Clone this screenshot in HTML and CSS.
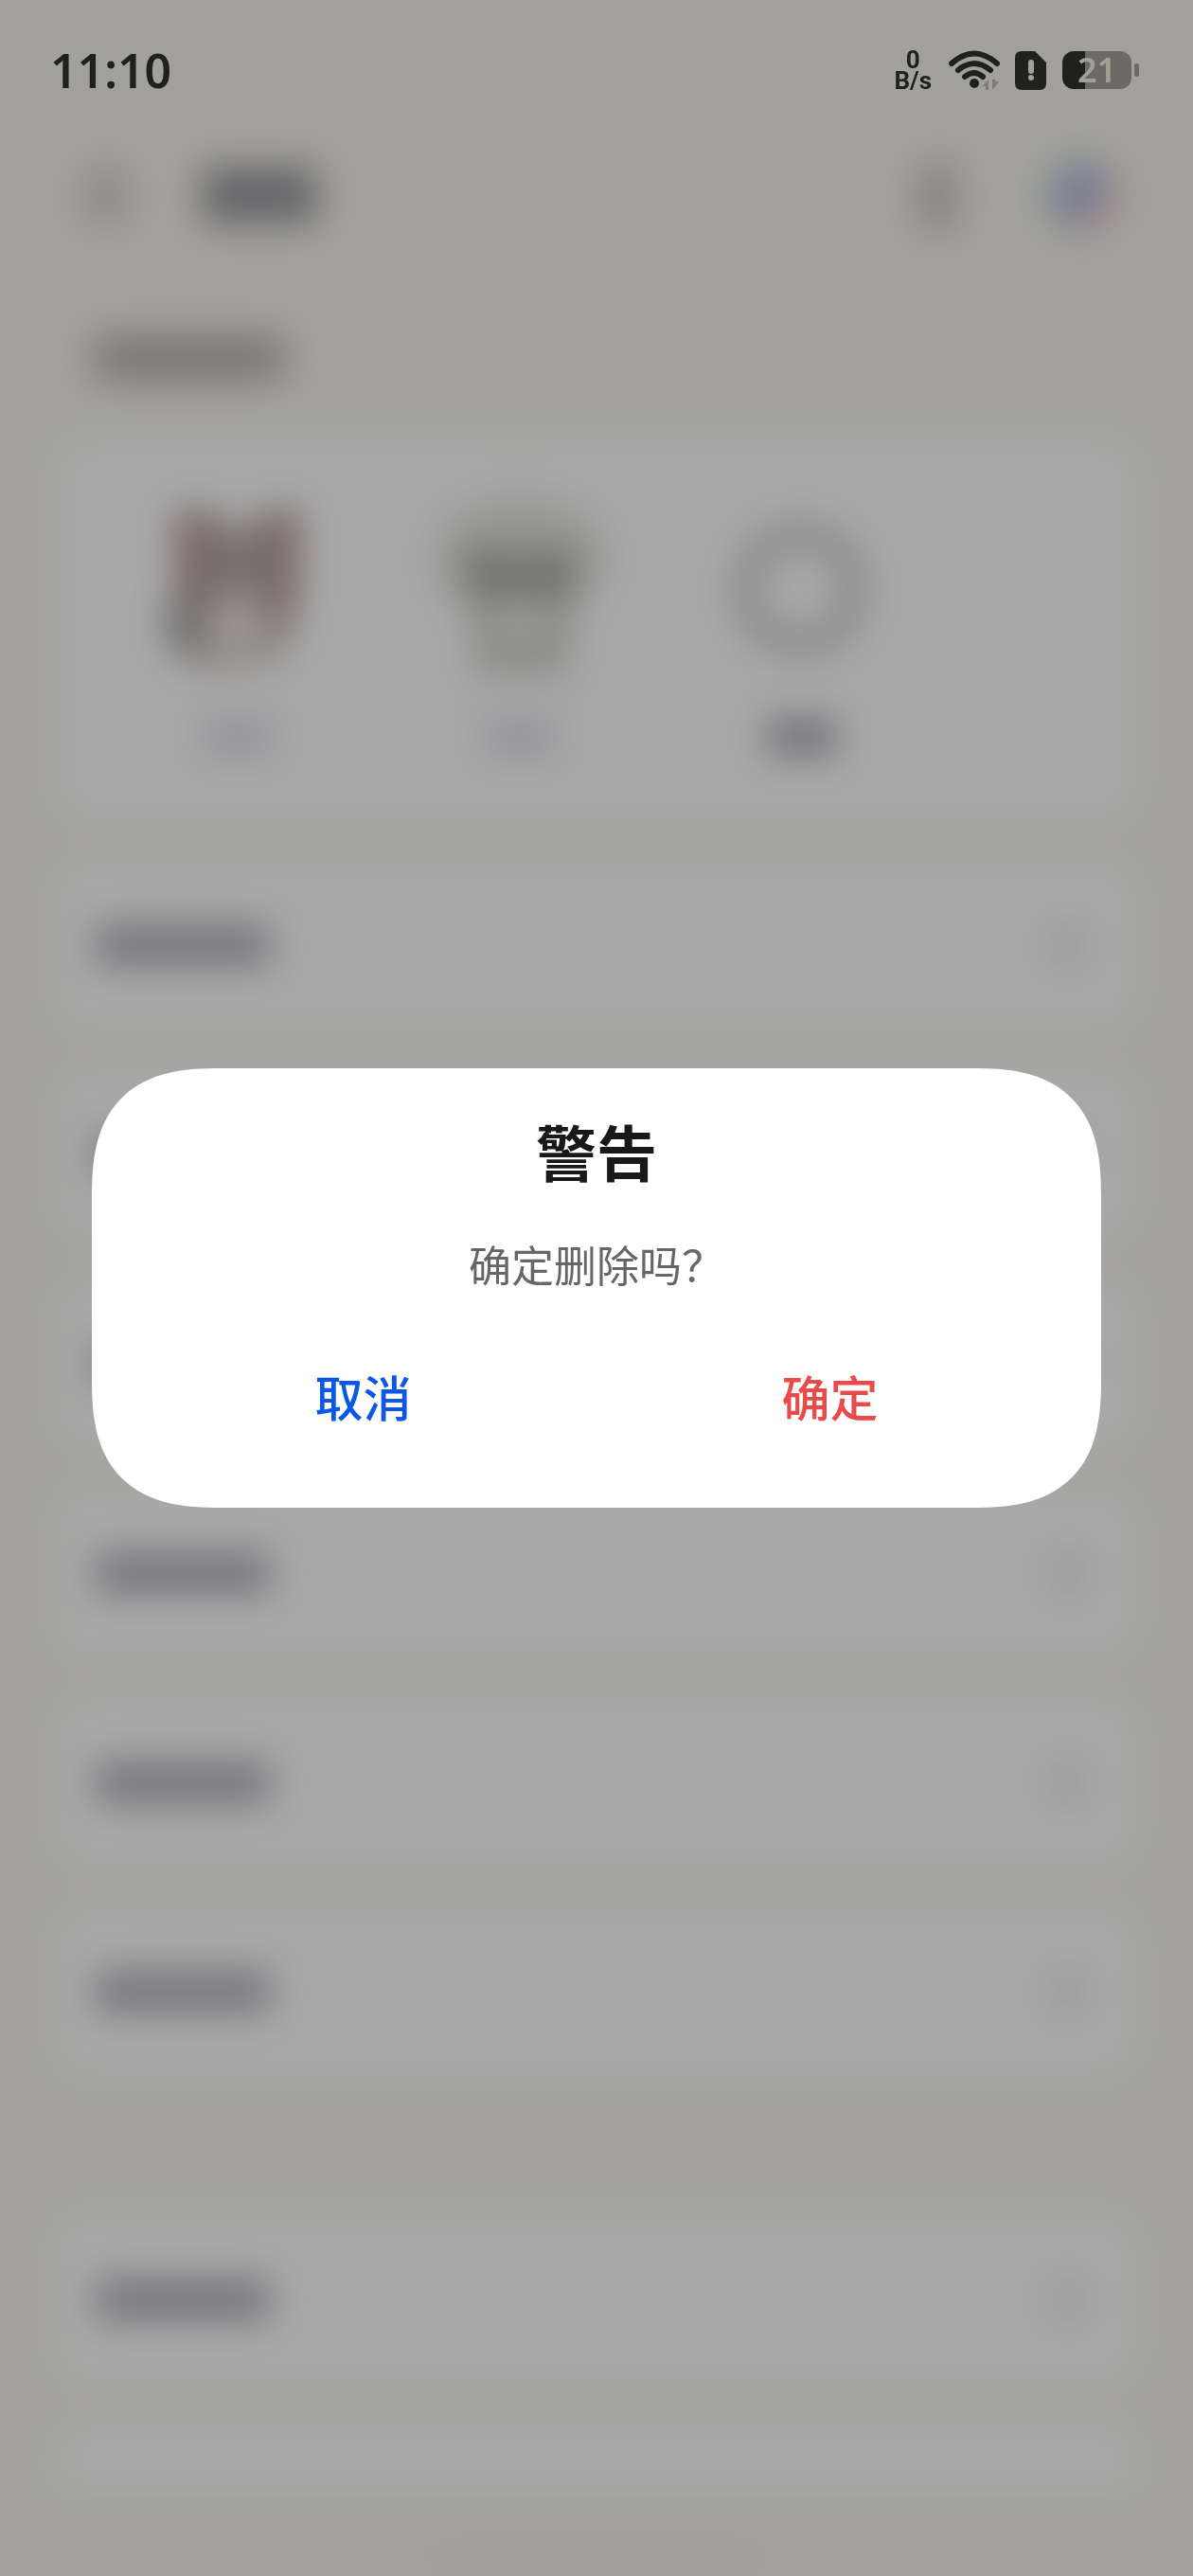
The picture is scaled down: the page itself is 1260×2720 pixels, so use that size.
FILE: index.html
```html
<!DOCTYPE html>
<html lang="zh-CN">
<head>
  <meta charset="UTF-8" />
  <meta name="viewport" content="width=device-width, initial-scale=1.0"/>
  <title>警告</title>
  <link rel="stylesheet" href="styles.css">
</head>
<body>
  <!-- blurred page behind the dialog -->
  <div class="page" aria-hidden="true">
    <div class="top-bar">
      <span class="back"></span>
      <span class="heading"></span>
      <span class="bulb"></span>
      <span class="orb"></span>
    </div>
    <div class="section-label"></div>

    <div class="list">
      <div class="card avatars">
        <div class="avatar">
          <svg width="200" height="200" viewBox="0 0 200 200">
            <path d="M34 28h36l30 20 30-20h36v82l-14 62-40 16H56l-22-14z" fill="#bfb3ab"/>
            <path d="M34 24h40v102H40zM126 24h40l-8 114h-26z" fill="#b39394"/>
            <path d="M66 46h68v60H66z" fill="#b0a8a0"/>
            <path d="M26 120h34v50H26z" fill="#9c9c9c"/>
            <ellipse cx="98" cy="146" rx="32" ry="30" fill="#eee8dc"/>
          </svg>
          <span class="name faint"></span>
        </div>
        <div class="avatar">
          <svg width="200" height="200" viewBox="0 0 200 200">
            <ellipse cx="100" cy="76" rx="92" ry="66" fill="#dfdfdb"/>
            <path d="M46 108h112l-6 92H52z" fill="#d0d0cc"/>
            <path d="M44 68h42l14 20 14-20h42v46H44z" fill="#a3a3a0"/>
            <circle cx="100" cy="142" r="20" fill="#f2f2f0"/>
          </svg>
          <span class="name faint"></span>
        </div>
        <div class="avatar">
          <svg width="200" height="200" viewBox="0 0 200 200">
            <circle cx="98" cy="108" r="58" fill="none" stroke="#c2c2c2" stroke-width="24"/>
          </svg>
          <span class="name"></span>
        </div>
      </div>
      <div class="card row"><span class="label"></span><span class="arrow"></span></div>
      <div class="card row"><span class="label"></span><span class="arrow"></span></div>
      <div class="card row"><span class="label"></span><span class="arrow"></span></div>
      <div class="card row"><span class="label"></span><span class="arrow"></span></div>
      <div class="card row"><span class="label"></span><span class="arrow"></span></div>
      <div class="card row"><span class="label"></span><span class="arrow"></span></div>
      <div class="card row group-start"><span class="label"></span><span class="arrow"></span></div>
      <div class="card row"></div>
    </div>

    <div class="nav-area"><span class="nav-handle"></span></div>
  </div>

  <div class="overlay">
    <div class="dialog" role="alertdialog" aria-labelledby="dialogTitle" aria-describedby="dialogText">
      <h2 id="dialogTitle">警告</h2>
      <p id="dialogText">确定删除吗？</p>
      <div class="actions">
        <button class="cancel" type="button">取消</button>
        <button class="confirm" type="button">确定</button>
      </div>
    </div>
  </div>

  <div class="status-bar">
    <span class="time">11:10</span>
    <div class="status-icons">
      <div class="speed">0<br>B/s</div>
      <svg class="wifi" width="54" height="42" viewBox="0 0 54 42">
        <g fill="none" stroke="#20201d" stroke-width="6" stroke-linecap="round">
          <path d="M3 14Q27 -7 51 14"/>
          <path d="M10 21Q27 7 44 21"/>
          <path d="M17 28Q27 20 36 28"/>
        </g>
        <circle cx="27" cy="35" r="5" fill="#20201d"/>
        <path d="M42 31v11h-3v-4h-4zM46 31v11l7-9h-4v-2z" fill="#7c7b75"/>
      </svg>
      <svg class="sim" width="34" height="41" viewBox="0 0 34 41">
        <path d="M7 0H21L33 12V34Q33 41 26 41H7Q0 41 0 34V7Q0 0 7 0Z" fill="#20201d"/>
        <path d="M17 12v9" stroke="#a2a198" stroke-width="6" stroke-linecap="round"/>
        <circle cx="17" cy="28" r="3" fill="#a2a198"/>
      </svg>
      <div class="battery"><span class="level">21</span><span class="tip"></span></div>
    </div>
  </div>
</body>
</html>
```
FILE: styles.css
```css
* {
  box-sizing: border-box;
}

body {
  margin: 0;
  background: #f2f0e5;
  font-family: "Noto Sans", "Noto Sans CJK SC", sans-serif;
}

/* page behind */
.page {
  display: flex;
  flex-direction: column;
  height: 100vh;
  padding: 156px 52px 0;
  background: #f2f0e5;
  filter: blur(20px);
  overflow: hidden;
}

.top-bar {
  display: flex;
  align-items: center;
  height: 100px;
  padding: 0 30px 0 36px;
}

.back {
  width: 48px;
  height: 64px;
  border-radius: 24px;
  background: #cfcec4;
}

.heading {
  width: 120px;
  height: 58px;
  margin-left: 78px;
  margin-right: auto;
  background: #94939b;
}

.bulb {
  width: 40px;
  height: 72px;
  border-radius: 20px 20px 10px 10px;
  background: #c2c1b8;
}

.orb {
  width: 72px;
  height: 72px;
  margin-left: 96px;
  border-radius: 50%;
  background: linear-gradient(120deg, #a4cbdc 20%, #aeb2dc 50%, #e4bccd 80%);
}

.section-label {
  width: 200px;
  height: 46px;
  margin: 99px 0 57px 48px;
  background: #b0afa6;
}

.list {
  flex: 1;
  min-height: 0;
  overflow: hidden;
}

.card {
  margin-bottom: 30px;
  border-radius: 40px;
  background: #fcfcfc;
}

.avatars {
  display: flex;
  height: 414px;
  padding: 56px 50px;
}

.avatar {
  display: flex;
  flex-direction: column;
  align-items: center;
  gap: 44px;
  width: 298px;
}

.name {
  width: 76px;
  height: 40px;
  background: #a9a8b2;
}

.name.faint {
  background: #dadae4;
}

.row {
  display: flex;
  align-items: center;
  justify-content: space-between;
  height: 191px;
  padding: 0 68px 0 48px;
}

.row.group-start {
  margin-top: 134px;
}

.label {
  width: 186px;
  height: 46px;
  background: #b2b1ba;
}

.arrow {
  width: 26px;
  height: 40px;
  background: #d8d8d8;
}

.nav-area {
  display: flex;
  justify-content: center;
  align-items: center;
  height: 88px;
  padding-top: 40px;
}

.nav-handle {
  width: 360px;
  height: 10px;
  border-radius: 5px;
  background: #e4e3d7;
}

/* dialog */
.overlay {
  position: fixed;
  inset: 0;
  display: flex;
  justify-content: center;
  align-items: center;
  padding: 0 97px;
  background: rgba(0, 0, 0, 0.33);
}

.dialog {
  width: 100%;
  padding: 48px 40px 64px;
  border-radius: 104px;
  background: #fff;
  text-align: center;
}

@supports (corner-shape: superellipse(1.5)) {
  .dialog {
    border-radius: 136px;
    corner-shape: superellipse(1.4);
  }
}

.dialog h2 {
  margin: 0;
  font-size: 64px;
  line-height: 84px;
  color: #191919;
}

.dialog p {
  margin: 44px 0 50px;
  font-size: 45px;
  line-height: 66px;
  color: #666;
}

.actions {
  display: flex;
}

.actions button {
  flex: 1;
  height: 108px;
  padding: 0;
  border: none;
  background: none;
  font-family: inherit;
  font-size: 51px;
  font-weight: 500;
  cursor: pointer;
}

.actions .cancel {
  color: #0b57e8;
}

.actions .confirm {
  color: #e94b4b;
}

/* status bar */
.status-bar {
  position: fixed;
  top: 0;
  left: 0;
  right: 0;
  display: flex;
  justify-content: space-between;
  align-items: center;
  height: 148px;
  padding: 0 57px 0 53px;
  color: #20201d;
}

.time {
  font-size: 50px;
  font-weight: 600;
}

.status-icons {
  display: flex;
  align-items: center;
}

.speed {
  font-family: Roboto, sans-serif;
  font-size: 26px;
  font-weight: 700;
  line-height: 22px;
  text-align: center;
}

.wifi {
  margin-left: 18px;
}

.sim {
  margin: 0 16px;
}

.battery {
  display: flex;
  align-items: center;
  gap: 3px;
}

.level {
  width: 73px;
  height: 40px;
  border-radius: 12px;
  background: linear-gradient(90deg, #20201d 24px, #6b6a66 24px);
  color: #a2a198;
  font-size: 36px;
  font-weight: 600;
  line-height: 39px;
  text-align: center;
}

.tip {
  width: 5px;
  height: 14px;
  border-radius: 3px;
  background: #6b6a66;
}
```
